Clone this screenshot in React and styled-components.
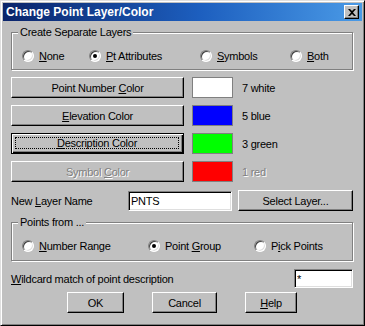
import React from "react";
import styled, { createGlobalStyle } from "styled-components";

const GlobalStyle = createGlobalStyle`
  html, body {
    margin: 0;
    padding: 0;
    background: #c0c0c0;
  }
  body {
    font-family: "Liberation Sans", Arial, sans-serif;
    font-size: 11px;
    letter-spacing: -0.25px;
    color: #000;
  }
`;

const layers = [
  { id: "none", key: "N", rest: "one" },
  { id: "pt", key: "P", rest: "t Attributes", on: true },
  { id: "sym", key: "S", rest: "ymbols" },
  { id: "both", key: "B", rest: "oth" },
];

const colors = [
  { pre: "Point Number ", key: "C", post: "olor", swatch: "#ffffff", name: "7 white" },
  { pre: "", key: "E", post: "levation Color", swatch: "#0000ff", name: "5 blue" },
  { pre: "", key: "D", post: "escription Color", swatch: "#00ff00", name: "3 green", focus: true },
  { pre: "Symbol ", key: "C", post: "olor", swatch: "#ff0000", name: "1 red", disabled: true },
];

const App = () => {
  return (
    <>
      <GlobalStyle />
      <Window>
        <TitleBar>
          <Title>Change Point Layer/Color</Title>
          <CloseButton>
            <svg width="8" height="7" viewBox="0 0 8 7">
              <path
                d="M0 0h2l2 2 2-2h2L5 3.5 8 7H6L4 5 2 7H0l3-3.5z"
                fill="#000"
              />
            </svg>
          </CloseButton>
        </TitleBar>

        <Body>
          <Group $mt={11} $h={38}>
            <Legend>Create Separate Layers</Legend>
            <RadioRow $cols="67px 111px 90px auto">
              {layers.map((l) => (
                <Radio key={l.id}>
                  <Circle $on={l.on} />
                  <span>
                    <u>{l.key}</u>
                    {l.rest}
                  </span>
                </Radio>
              ))}
            </RadioRow>
          </Group>

          {colors.map((c, i) => (
            <Row key={i} $mt={7}>
              <Button $w={173} $default={c.focus} disabled={c.disabled}>
                <Label $focus={c.focus}>
                  <span>
                    {c.pre}
                    <u>{c.key}</u>
                    {c.post}
                  </span>
                </Label>
              </Button>
              <Swatch style={{ background: c.swatch }} />
              <ColorName $disabled={c.disabled}>{c.name}</ColorName>
            </Row>
          ))}

          <Row $mt={8}>
            <FieldLabel $w={117}>
              New <u>L</u>ayer Name
            </FieldLabel>
            <Input $w={104} $h={20} readOnly defaultValue="PNTS" />
            <Button $w={115} $ml={6}>
              <Label>
                <span>Select Layer...</span>
              </Label>
            </Button>
          </Row>

          <Group $mt={11} $h={39}>
            <Legend>Points from ...</Legend>
            <RadioRow $cols="126px 106px auto">
              <Radio>
                <Circle />
                <span>
                  <u>N</u>umber Range
                </span>
              </Radio>
              <Radio>
                <Circle $on />
                <span>
                  Point <u>G</u>roup
                </span>
              </Radio>
              <Radio>
                <Circle />
                <span>
                  P<u>i</u>ck Points
                </span>
              </Radio>
            </RadioRow>
          </Group>

          <Row $mt={8}>
            <FieldLabel $grow>
              <u>W</u>ildcard match of point description
            </FieldLabel>
            <Input $w={59} $h={19} readOnly defaultValue="*" />
          </Row>

          <Actions>
            <Button $w={57}>
              <Label>
                <span>OK</span>
              </Label>
            </Button>
            <Button $w={65}>
              <Label>
                <span>Cancel</span>
              </Label>
            </Button>
            <Button $w={52}>
              <Label>
                <span>
                  <u>H</u>elp
                </span>
              </Label>
            </Button>
          </Actions>
        </Body>
      </Window>
    </>
  );
};

const Window = styled.div`
  box-sizing: border-box;
  width: 365px;
  height: 326px;
  padding: 2px;
  display: flex;
  flex-direction: column;
  background: #c0c0c0;
  border: 1px solid;
  border-color: #dfdfdf #000 #000 #dfdfdf;
  box-shadow: inset 1px 1px 0 #fff, inset -1px -1px 0 #808080;
`;

const TitleBar = styled.div`
  height: 18px;
  display: flex;
  align-items: center;
  justify-content: space-between;
  padding: 0 3px 0 3px;
  background: linear-gradient(90deg, #0a246a 0%, #1d5fbf 55%, #4a9ae6 100%);
`;

const Title = styled.span`
  color: #fff;
  font-weight: bold;
  font-size: 12px;
  letter-spacing: 0;
`;

const CloseButton = styled.div`
  box-sizing: border-box;
  width: 15px;
  height: 14px;
  display: flex;
  align-items: center;
  justify-content: center;
  background: #c0c0c0;
  border: 1px solid;
  border-color: #fff #000 #000 #fff;
  box-shadow: inset -1px -1px 0 #808080;
`;

const Body = styled.div`
  display: flex;
  flex-direction: column;
  padding: 0 9px 0 8px;
`;

const Group = styled.div`
  box-sizing: border-box;
  height: ${(p) => p.$h}px;
  margin-top: ${(p) => p.$mt}px;
  border: 1px solid #808080;
  box-shadow: 1px 1px 0 #fff, inset 1px 1px 0 #fff;
`;

const Legend = styled.div`
  width: fit-content;
  height: 13px;
  line-height: 13px;
  margin: -7px 0 0 6px;
  padding: 0 2px;
  background: #c0c0c0;
`;

const RadioRow = styled.div`
  display: grid;
  grid-template-columns: ${(p) => p.$cols};
  margin-top: 10px;
  padding-left: 10px;
  height: 13px;
  align-items: center;
`;

const Radio = styled.label`
  display: flex;
  align-items: center;
  gap: 5px;
`;

const Circle = styled.span`
  box-sizing: border-box;
  width: 12px;
  height: 12px;
  border-radius: 50%;
  display: flex;
  align-items: center;
  justify-content: center;
  background: #fff;
  border: 1px solid;
  border-color: #808080 #fff #fff #808080;
  box-shadow: inset 1px 1px 0 #404040, inset -1px -1px 0 #dfdfdf;

  &::after {
    content: "";
    width: 4px;
    height: 4px;
    border-radius: 50%;
    background: ${(p) => (p.$on ? "#000" : "transparent")};
  }
`;

const Row = styled.div`
  display: flex;
  align-items: center;
  margin-top: ${(p) => p.$mt}px;
`;

const Button = styled.button`
  box-sizing: border-box;
  width: ${(p) => p.$w}px;
  height: 21px;
  margin: 0 0 0 ${(p) => p.$ml || 0}px;
  padding: 0;
  display: flex;
  font: inherit;
  letter-spacing: inherit;
  color: #000;
  background: #c0c0c0;
  border: 1px solid;
  border-color: ${(p) => (p.$default ? "#000" : "#fff #000 #000 #fff")};
  box-shadow: ${(p) =>
    p.$default
      ? "inset 1px 1px 0 #fff, inset -1px -1px 0 #000, inset -2px -2px 0 #808080"
      : "inset -1px -1px 0 #808080"};

  &:disabled {
    color: #808080;
    text-shadow: 1px 1px 0 #fff;
  }
`;

const Label = styled.span`
  flex: 1;
  display: flex;
  align-items: center;
  justify-content: center;
  margin: ${(p) => (p.$focus ? "3px 4px 4px 3px" : "0")};
  border: ${(p) => (p.$focus ? "1px dotted #000" : "none")};
`;

const Swatch = styled.div`
  box-sizing: border-box;
  width: 41px;
  height: 21px;
  margin-left: 8px;
  border: 1px solid #808080;
`;

const ColorName = styled.span`
  margin-left: 9px;
  color: ${(p) => (p.$disabled ? "#808080" : "#000")};
  text-shadow: ${(p) => (p.$disabled ? "1px 1px 0 #fff" : "none")};
`;

const FieldLabel = styled.span`
  width: ${(p) => (p.$w ? `${p.$w}px` : "auto")};
  flex: ${(p) => (p.$grow ? 1 : "none")};
`;

const Input = styled.input`
  box-sizing: border-box;
  width: ${(p) => p.$w}px;
  height: ${(p) => p.$h}px;
  margin: 0;
  padding: 0 2px;
  font: inherit;
  letter-spacing: inherit;
  color: #000;
  background: #fff;
  outline: none;
  border: 1px solid;
  border-color: #808080 #fff #fff #808080;
  box-shadow: inset 1px 1px 0 #000, inset -1px -1px 0 #dfdfdf;
`;

const Actions = styled.div`
  display: flex;
  justify-content: center;
  gap: 28px;
  margin-top: 4px;
`;

export default App;
